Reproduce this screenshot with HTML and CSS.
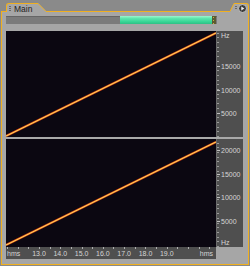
FILE: index.html
```html
<!DOCTYPE html>
<html lang="en">

<head>
  <meta charset="UTF-8" />
  <title>Main</title>
  <link rel="stylesheet" href="styles.css">
</head>

<body>
  <div class="window">
    <div class="tabbar">
      <div class="lead"></div>
      <div class="tab"><span class="grip"></span>Main</div>
      <svg class="slant" width="9" height="9" viewBox="0 0 9 9">
        <path d="M0 0 L9 9 L0 9 Z" fill="#a6a6a6" />
        <path d="M0 0.5 L8 8.5 L9 8.5" fill="none" stroke="#f0b020" stroke-width="1" />
      </svg>
      <div class="fill"></div>
      <svg class="slant" width="4" height="9" viewBox="0 0 4 9">
        <path d="M0 9 L4 0 L4 9 Z" fill="#a6a6a6" />
        <path d="M0 8.5 L4 0.5" fill="none" stroke="#f0b020" stroke-width="1" />
      </svg>
      <div class="corner">
        <span class="grip small"></span>
        <span class="menu-btn">
          <svg width="9" height="9" viewBox="0 0 9 9">
            <circle cx="4.5" cy="4.5" r="4" fill="#3e3e3e" stroke="#c4c4c4" stroke-width="1" />
            <path d="M3.3 2.4 L6.3 4.5 L3.3 6.6 Z" fill="#f2f2f2" />
          </svg>
        </span>
      </div>
    </div>

    <div class="panel">
      <div class="scroll">
        <div class="thumb"></div>
        <div class="cap"></div>
      </div>

      <div class="view">
        <div class="plot">
          <svg width="210" height="106" viewBox="0 0 210 106">
            <line x1="0" y1="105" x2="210" y2="2" stroke="#d8401a" stroke-width="2.3" />
            <line x1="0" y1="105" x2="210" y2="2" stroke="#ffdc58" stroke-width="1.1" />
          </svg>
        </div>
        <div class="yaxis top">
          <div class="unit">Hz</div>
          <div class="label">15000</div>
          <div class="label">10000</div>
          <div class="label">5000</div>
        </div>

        <div class="sep"></div>

        <div class="plot">
          <svg width="210" height="108" viewBox="0 0 210 108">
            <line x1="0" y1="106" x2="210" y2="3" stroke="#d8401a" stroke-width="2.3" />
            <line x1="0" y1="106" x2="210" y2="3" stroke="#ffdc58" stroke-width="1.1" />
          </svg>
        </div>
        <div class="yaxis bottom">
          <div class="label">20000</div>
          <div class="label">15000</div>
          <div class="label">10000</div>
          <div class="label">5000</div>
          <div class="unit">Hz</div>
        </div>

        <div class="xaxis">
          <span class="first">hms</span>
          <span>13.0</span>
          <span>14.0</span>
          <span>15.0</span>
          <span>16.0</span>
          <span>17.0</span>
          <span>18.0</span>
          <span>19.0</span>
          <span class="last">hms</span>
        </div>
      </div>
    </div>
  </div>
</body>

</html>
```

FILE: styles.css
```css
body {
  margin: 0;
  background-color: #8a8a8a;
  font-family: "Liberation Sans", Arial, sans-serif;
}

.window {
  width: 248px;
  margin: 3px 0 0 1px;
}

/* tab strip */

.tabbar {
  display: flex;
  height: 9px;
}

.lead {
  width: 5px;
  border-bottom: 1px solid #f0b020;
  box-sizing: border-box;
}

.tab {
  display: flex;
  align-items: center;
  width: 32px;
  padding-left: 2px;
  box-sizing: border-box;
  border-top: 1px solid #f0b020;
  border-left: 1px solid #f0b020;
  border-top-left-radius: 3px;
  background-color: #a6a6a6;
  color: #1e1e1e;
  font-size: 8.5px;
  line-height: 8px;
  padding-top: 1px;
}

.grip {
  display: inline-block;
  width: 2px;
  height: 6px;
  margin-right: 3px;
  background-image: repeating-linear-gradient(to bottom, #6a6a6a 0 1px, transparent 1px 2px);
}

.slant {
  display: block;
  flex: none;
}

.fill {
  flex: 1;
  border-bottom: 1px solid #f0b020;
}

.corner {
  display: flex;
  align-items: center;
  width: 15px;
  box-sizing: border-box;
  border-top: 1px solid #f0b020;
  border-right: 1px solid #f0b020;
  border-top-right-radius: 3px;
  background-color: #a6a6a6;
  padding-left: 1px;
}

.grip.small {
  height: 4px;
  margin-right: 1px;
}

.menu-btn {
  display: block;
  width: 9px;
  height: 9px;
  margin-top: 1px;
}

.menu-btn svg {
  display: block;
}

/* panel */

.panel {
  height: 253px;
  box-sizing: border-box;
  padding: 4px 0 5px 4px;
  border: 1px solid #f0b020;
  border-top: none;
  background-color: #a6a6a6;
}

.scroll {
  display: flex;
  width: 211px;
  height: 8px;
  padding-left: 114px;
  box-sizing: border-box;
  background-color: #7b7b7b;
  box-shadow: inset 0 1px 0 #666;
}

.thumb {
  width: 92px;
  background: linear-gradient(to bottom, #9ef5d0 0, #5ee6ad 30%, #38d696 70%, #2fbf85 100%);
}

.cap {
  width: 4px;
  background-color: #5c5a34;
  background-image: repeating-linear-gradient(to bottom, transparent 0 1px, #c9b640 1px 2px, transparent 2px 3px);
  background-size: 1px 100%;
  background-position: 1px 0;
  background-repeat: no-repeat;
}

.view {
  display: grid;
  grid-template-columns: 210px 27px;
  grid-template-rows: 106px 2px 108px 12px;
  margin-top: 7px;
}

.plot {
  background-color: #0b0711;
  overflow: hidden;
}

.plot svg {
  display: block;
}

.sep {
  grid-column: 1 / 3;
  background-color: #a9a9a9;
}

.yaxis {
  display: flex;
  flex-direction: column;
  background-color: #4f4f4f;
  color: #d6d6d6;
  font-size: 7px;
  border-left: 1px solid #6a6a6a;
  background-image: repeating-linear-gradient(to top, #9a9a9a 0 1px, transparent 1px 4.7px);
  background-size: 2px 100%;
  background-repeat: no-repeat;
  background-position: left bottom;
}

.yaxis .unit {
  padding-left: 4px;
  line-height: 8px;
}

.yaxis.top .unit {
  height: 24px;
  padding-top: 1px;
  box-sizing: border-box;
}

.yaxis.bottom .unit {
  margin-top: auto;
}

.yaxis .label {
  position: relative;
  height: 23.5px;
  line-height: 23.5px;
  padding-left: 4px;
}

.yaxis .label::before {
  content: "";
  position: absolute;
  left: 0;
  top: 11px;
  width: 3px;
  height: 1px;
  background-color: #bdbdbd;
}

.xaxis {
  display: flex;
  background-color: #4f4f4f;
  color: #d6d6d6;
  font-size: 7px;
  line-height: 12px;
  padding-top: 1px;
  box-sizing: border-box;
  background-image: repeating-linear-gradient(to right, #b0b0b0 0 1px, transparent 1px 10.65px);
  background-size: 100% 2px;
  background-repeat: no-repeat;
  background-position: 1px 0;
}

.xaxis span {
  width: 21.3px;
  text-align: center;
  flex: none;
}

.xaxis .first {
  width: 22.35px;
  text-align: left;
  padding-left: 1px;
  box-sizing: border-box;
}

.xaxis .last {
  width: auto;
  margin-left: auto;
  padding-right: 3px;
}
```
